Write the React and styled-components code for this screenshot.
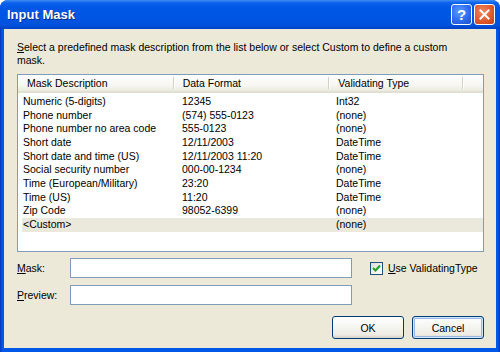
import React from "react";
import styled, { createGlobalStyle, css } from "styled-components";

const GlobalStyle = createGlobalStyle`
  html, body { margin: 0; padding: 0; background: #ffffff; }
  body { font-family: "Liberation Sans", Tahoma, Arial, sans-serif; }
`;

const MASKS = [
  { name: "Numeric (5-digits)", format: "12345", type: "Int32" },
  { name: "Phone number", format: "(574) 555-0123", type: "(none)" },
  { name: "Phone number no area code", format: "555-0123", type: "(none)" },
  { name: "Short date", format: "12/11/2003", type: "DateTime" },
  { name: "Short date and time (US)", format: "12/11/2003 11:20", type: "DateTime" },
  { name: "Social security number", format: "000-00-1234", type: "(none)" },
  { name: "Time (European/Military)", format: "23:20", type: "DateTime" },
  { name: "Time (US)", format: "11:20", type: "DateTime" },
  { name: "Zip Code", format: "98052-6399", type: "(none)" },
  { name: "<Custom>", format: "", type: "(none)", selected: true },
];

const Window = styled.div`
  width: 500px;
  height: 352px;
  display: flex;
  flex-direction: column;
  background: linear-gradient(to right, #0831b8 0px, #0058e8 2px, #0058e8 498px, #0831b8 500px);
  border-radius: 8px 8px 0 0;
  overflow: hidden;
`;

const TitleBar = styled.div`
  height: 29px;
  flex-shrink: 0;
  display: flex;
  align-items: center;
  justify-content: space-between;
  padding: 0 5px 0 7px;
  background: linear-gradient(to bottom, #3f8cf3 0px, #0a61ec 3px, #0057e6 8px, #0055e3 18px, #0052dc 25px, #0040c4 29px);
`;

const Title = styled.span`
  color: #ffffff;
  font: bold 13px "Liberation Sans", Arial, sans-serif;
  text-shadow: 1px 1px 0 #0a2a80;
`;

const CaptionButtons = styled.div`
  display: flex;
  gap: 2px;
`;

const CaptionButton = styled.div`
  width: 21px;
  height: 21px;
  box-sizing: border-box;
  border: 1px solid #ffffff;
  border-radius: 3px;
  display: flex;
  align-items: center;
  justify-content: center;
  color: #ffffff;
  font: bold 15px "Liberation Sans", Arial, sans-serif;
  ${p => p.$close ? css`
    background: radial-gradient(circle at 40% 35%, #f08a64 0%, #e05a2d 55%, #c4401a 100%);
  ` : css`
    background: radial-gradient(circle at 40% 35%, #5d9bff 0%, #2d6cf0 55%, #1a4fd0 100%);
  `}
`;

const Body = styled.div`
  flex: 1;
  margin: 0 4px 4px 4px;
  background: #ece9d8;
  padding: 12px 12px 0 13px;
  font-size: 10.5px;
  color: #000000;
`;

const Instruction = styled.p`
  margin: 0;
  line-height: 13px;
`;

const ListBox = styled.div`
  margin-top: 7px;
  height: 178px;
  box-sizing: border-box;
  border: 1px solid #7f9db9;
  background: #ffffff;
`;

const Header = styled.div`
  display: flex;
  height: 18px;
  box-sizing: border-box;
  background: linear-gradient(to bottom, #ffffff 0%, #f6f5f0 70%, #ebeadb 100%);
  border-bottom: 2px solid #e2e0d3;
`;

const HeaderCell = styled.div`
  width: ${p => p.$w}px;
  box-sizing: border-box;
  padding-left: 9px;
  line-height: 16px;
  border-right: ${p => (p.$last ? "none" : "1px solid #d4d0c3")};
  box-shadow: ${p => (p.$last ? "none" : "1px 0 0 #ffffff")};
  margin: ${p => (p.$last ? "0" : "2px 0")};
  line-height: ${p => (p.$last ? "16px" : "12px")};
  padding-top: ${p => (p.$last ? "0" : "0")};
`;

const Rows = styled.div`
  padding: 2px 0 0 4px;
`;

const Row = styled.div`
  display: grid;
  grid-template-columns: 160px 154px 127px;
  height: 13.67px;
  line-height: 13.67px;
  background: ${p => (p.$selected ? "#ebe9dc" : "transparent")};
`;

const Cell = styled.span`
  padding-left: ${p => p.$pad || 0}px;
  white-space: nowrap;
`;

const Fields = styled.div`
  display: grid;
  grid-template-columns: 53px 282px 1fr;
  grid-template-rows: 20px 20px;
  row-gap: 7px;
  margin-top: 6px;
  align-items: center;
`;

const Label = styled.label`
  white-space: nowrap;
`;

const TextBox = styled.div`
  height: 20px;
  box-sizing: border-box;
  border: 1px solid #7f9db9;
  background: #ffffff;
`;

const CheckRow = styled.div`
  display: flex;
  align-items: center;
  gap: 5px;
  padding-left: 18px;
`;

const CheckBox = styled.div`
  width: 13px;
  height: 13px;
  box-sizing: border-box;
  border: 1px solid #1c5180;
  background: linear-gradient(135deg, #dcdcd7 0%, #f3f3ef 60%, #ffffff 100%);
  display: flex;
  align-items: center;
  justify-content: center;
`;

const ButtonRow = styled.div`
  display: flex;
  justify-content: flex-end;
  gap: 8px;
  margin-top: 11px;
`;

const Button = styled.div`
  width: 72px;
  height: 23px;
  box-sizing: border-box;
  border: 1px solid #003c74;
  border-radius: 3px;
  background: linear-gradient(to bottom, #ffffff 0%, #f4f4f0 50%, #eceae2 85%, #d6d0c5 100%);
  display: flex;
  align-items: center;
  justify-content: center;
  ${p => p.$default && css`
    box-shadow: inset 0 0 0 1px #cee7ff, inset 0 0 0 2px #98b8ea;
  `}
`;

export default function App() {
  return (
    <>
      <GlobalStyle />
      <Window>
        <TitleBar>
          <Title>Input Mask</Title>
          <CaptionButtons>
            <CaptionButton>?</CaptionButton>
            <CaptionButton $close>
              <svg width="11" height="11" viewBox="0 0 11 11">
                <path d="M1.5 1.5 L9.5 9.5 M9.5 1.5 L1.5 9.5" stroke="#ffffff" strokeWidth="2" strokeLinecap="square" />
              </svg>
            </CaptionButton>
          </CaptionButtons>
        </TitleBar>
        <Body>
          <Instruction>
            <u>S</u>elect a predefined mask description from the list below or select Custom to define a custom
            <br />
            mask.
          </Instruction>
          <ListBox>
            <Header>
              <HeaderCell $w={156}>Mask Description</HeaderCell>
              <HeaderCell $w={156}>Data Format</HeaderCell>
              <HeaderCell $w={134}>Validating Type</HeaderCell>
              <HeaderCell $w={20} $last />
            </Header>
            <Rows>
              {MASKS.map(m => (
                <Row key={m.name} $selected={m.selected}>
                  <Cell $pad={1}>{m.name}</Cell>
                  <Cell>{m.format}</Cell>
                  <Cell>{m.type}</Cell>
                </Row>
              ))}
            </Rows>
          </ListBox>
          <Fields>
            <Label><u>M</u>ask:</Label>
            <TextBox />
            <CheckRow>
              <CheckBox>
                <svg width="9" height="9" viewBox="0 0 9 9">
                  <path d="M1 4 L3.5 6.5 L8 1.5" fill="none" stroke="#21a121" strokeWidth="2" />
                </svg>
              </CheckBox>
              <Label><u>U</u>se ValidatingType</Label>
            </CheckRow>
            <Label><u>P</u>review:</Label>
            <TextBox />
          </Fields>
          <ButtonRow>
            <Button>OK</Button>
            <Button $default>Cancel</Button>
          </ButtonRow>
        </Body>
      </Window>
    </>
  );
}
